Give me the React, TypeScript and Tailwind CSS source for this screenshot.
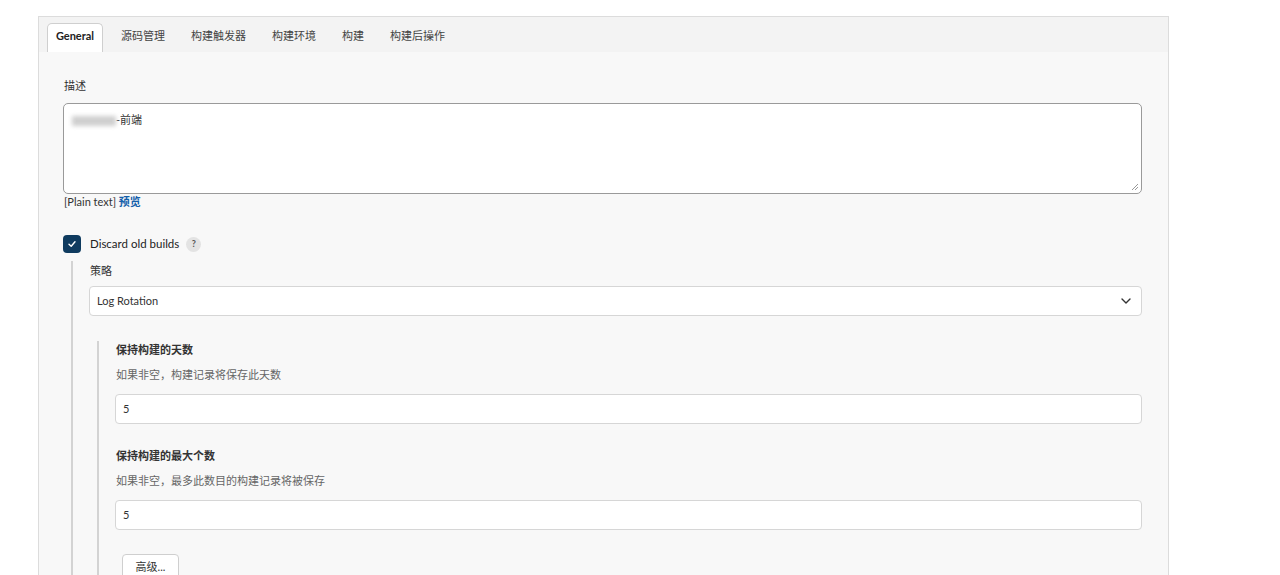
import React from "react";

const font = { fontFamily: 'Lato, "Noto Sans CJK SC", sans-serif' };

const tabs = ["General", "源码管理", "构建触发器", "构建环境", "构建", "构建后操作"];

const Tabs = () => (
  <div className="flex h-[35px] items-end bg-[#f3f3f3] pl-[8px]">
    {tabs.map((t, i) =>
      i === 0 ? (
        <div
          key={t}
          className="flex h-[29px] w-[56px] items-center justify-center rounded-t-[5px] border border-b-0 border-[#cfcfcf] bg-white pb-[3px] text-[11px] font-bold text-[#222]"
        >
          {t}
        </div>
      ) : (
        <div key={t} className="flex h-[29px] items-center px-[13px] pb-[3px] text-[11px] text-[#444]">
          <span className={i === 1 ? "ml-[5px]" : ""}>{t}</span>
        </div>
      )
    )}
  </div>
);

const Field = (props: { label: string; hint: string; value: string }) => (
  <div>
    <div className="pl-[1px] text-[11px] leading-[16px] font-semibold text-[#333]">{props.label}</div>
    <div className="mt-[9px] pl-[1px] text-[11px] leading-[16px] text-[#666]">{props.hint}</div>
    <div className="mt-[11px] flex h-[30px] items-center rounded-[4px] border border-[#d6d6d6] bg-white px-[7px] text-[11px] text-[#333]">
      {props.value}
    </div>
  </div>
);

export default function App() {
  return (
    <div className="min-h-[575px] bg-white pt-[16px]" style={font}>
      <div className="ml-[38px] h-[560px] w-[1131px] border border-b-0 border-[#dcdcdc] bg-[#f8f8f8]">
        <Tabs />
        <div className="pt-[26px] pr-[26px] pl-[24px]">
          <div className="pl-[1px] text-[11px] leading-[16px] text-[#333]">描述</div>
          <div className="relative mt-[9px] h-[91px] rounded-[5px] border-[1.5px] border-[#9a9a9a] bg-white px-[8px] pt-[8px] text-[11px] leading-[16px] text-[#333]">
            <span className="inline-block h-[10px] w-[44px] bg-[#cfcfcf] align-middle blur-[2px]"></span>
            <span>-前端</span>
            <svg className="absolute right-[2px] bottom-[2px]" width="8" height="8" viewBox="0 0 8 8">
              <path d="M7 1 L1 7 M7 4 L4 7" stroke="#999" strokeWidth="1" />
            </svg>
          </div>
          <div className="pl-[1px] text-[11px] leading-[16px] text-[#333]">
            [Plain text] <span className="font-bold text-[#1460aa]">预览</span>
          </div>

          <div className="mt-[25px] flex h-[18px] items-center">
            <div className="flex h-[18px] w-[18px] items-center justify-center rounded-[4px] bg-[#0f3b5f]">
              <svg width="10" height="10" viewBox="0 0 10 10">
                <path d="M2 5.2 L4.2 7.3 L8 2.8" fill="none" stroke="white" strokeWidth="1.4" strokeLinecap="round" strokeLinejoin="round" />
              </svg>
            </div>
            <span className="ml-[9px] text-[11.5px] text-[#222]">Discard old builds</span>
            <span className="ml-[7px] flex h-[15px] w-[15px] items-center justify-center rounded-full bg-[#e3e3e3] text-[9px] font-bold text-[#555]">
              ?
            </span>
          </div>

          <div className="mt-[8px] ml-[8px] border-l-2 border-[#d3d3d3] pl-[16px]">
            <div className="pt-[2px] pl-[1px] text-[11px] leading-[16px] text-[#333]">策略</div>
            <div className="mt-[7px] flex h-[30px] items-center justify-between rounded-[4px] border border-[#d6d6d6] bg-white pr-[9px] pl-[7px] text-[11px] text-[#333]">
              <span>Log Rotation</span>
              <svg width="12" height="12" viewBox="0 0 12 12">
                <path d="M2 4 L6 8 L10 4" fill="none" stroke="#333" strokeWidth="1.4" strokeLinecap="round" strokeLinejoin="round" />
              </svg>
            </div>

            <div className="mt-[25px] ml-[8px] border-l-2 border-[#d3d3d3] pb-[20px] pl-[16px]">
              <div className="pt-[1px]">
                <Field label="保持构建的天数" hint="如果非空，构建记录将保存此天数" value="5" />
              </div>
              <div className="mt-[24px]">
                <Field label="保持构建的最大个数" hint="如果非空，最多此数目的构建记录将被保存" value="5" />
              </div>
              <button className="mt-[24px] ml-[7px] flex h-[26px] w-[57px] items-center justify-center rounded-[4px] border border-[#cfcfcf] bg-white text-[11px] text-[#333]">
                高级...
              </button>
            </div>
          </div>
        </div>
      </div>
    </div>
  );
}
